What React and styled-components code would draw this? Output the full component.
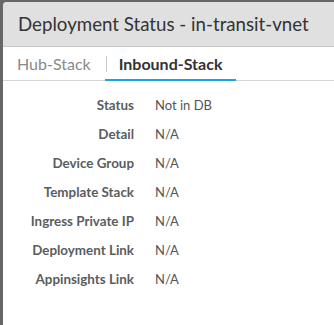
import React from 'react';
import styled, { createGlobalStyle } from 'styled-components';

const GlobalStyle = createGlobalStyle`
    html, body {
        margin: 0;
        padding: 0;
        background: #676767;
        font-family: Lato, "Open Sans", sans-serif;
    }
`;

const Dialog = styled.div`
    margin: 2px 0 0 3px;
    height: 323px;
    background: #fff;
    border-top-left-radius: 4px;
    overflow: hidden;
    display: flex;
    flex-direction: column;
`;

const Header = styled.div`
    height: 44px;
    background: #e0e0e0;
    border-bottom: 1px solid #c8c8c8;
    display: flex;
    align-items: center;
    padding-left: 15px;
    font-size: 18.7px;
    color: #333;
    white-space: nowrap;
`;

const Tabs = styled.div`
    display: flex;
    align-items: center;
    height: 33px;
    border-bottom: 1px solid #d6d6d6;
    padding-left: 14px;
`;

const Tab = styled.div`
    position: relative;
    height: 100%;
    display: flex;
    align-items: center;
    padding: 0 ${(p) => (p.active ? '14px 0 12px' : '0')};
    font-size: 16px;
    font-weight: ${(p) => (p.active ? 700 : 400)};
    color: ${(p) => (p.active ? '#333' : '#8a8a8a')};
    &:after {
        content: '';
        display: ${(p) => (p.active ? 'block' : 'none')};
        position: absolute;
        left: -2px;
        right: 0;
        bottom: -1px;
        height: 2px;
        background: #19a5e0;
    }
`;

const Sep = styled.div`
    width: 1px;
    height: 16px;
    background: #ccc;
    margin-left: 15px;
`;

const Body = styled.div`
    display: grid;
    grid-template-columns: 131px auto;
    column-gap: 21px;
    row-gap: 11px;
    padding-top: 15px;
    align-items: center;
`;

const Label = styled.div`
    text-align: right;
    font-size: 13.4px;
    font-weight: 700;
    color: #595d62;
    line-height: 18px;
    white-space: nowrap;
`;

const Value = styled.div`
    font-size: 13px;
    color: #555;
    line-height: 18px;
`;

const rows = [
    ['Status', 'Not in DB'],
    ['Detail', 'N/A'],
    ['Device Group', 'N/A'],
    ['Template Stack', 'N/A'],
    ['Ingress Private IP', 'N/A'],
    ['Deployment Link', 'N/A'],
    ['Appinsights Link', 'N/A'],
];

const App = () => (
    <>
        <GlobalStyle />
        <Dialog>
            <Header>Deployment Status - in-transit-vnet</Header>
            <Tabs>
                <Tab>Hub-Stack</Tab>
                <Sep />
                <Tab active>Inbound-Stack</Tab>
            </Tabs>
            <Body>
                {rows.map(([label, value]) => (
                    <React.Fragment key={label}>
                        <Label>{label}</Label>
                        <Value>{value}</Value>
                    </React.Fragment>
                ))}
            </Body>
        </Dialog>
    </>
);

export default App;
